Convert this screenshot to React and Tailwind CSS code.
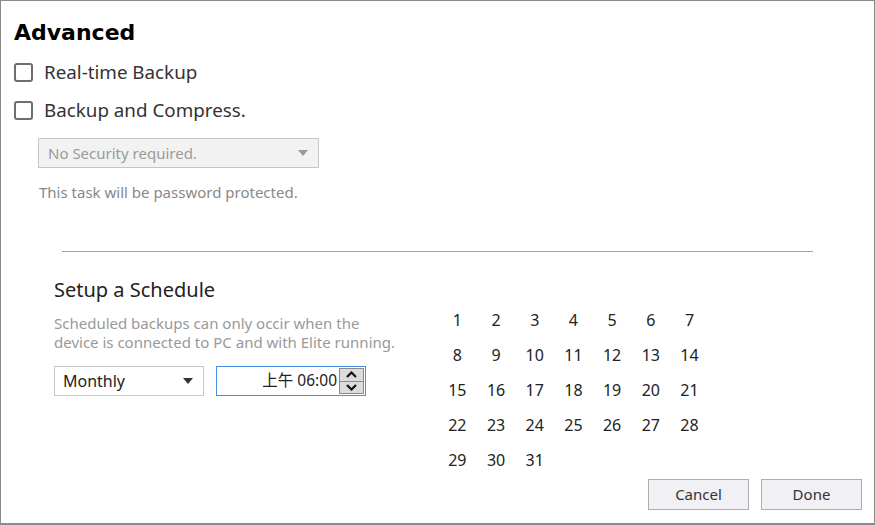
import React from 'react';

const font = { fontFamily: '"Noto Sans", "Noto Sans CJK TC", sans-serif' };

function Checkbox({ label }) {
    return (
        <label className="flex items-center h-[38px] gap-[11px]">
            <span className="w-[19px] h-[19px] rounded-[3px] border-2 border-[#6e6e6e] bg-white" />
            <span className="text-[18.8px] text-[#333]">{label}</span>
        </label>
    );
}

function Caret({ color = '#333' }) {
    return (
        <svg width="10" height="6" viewBox="0 0 10 6">
            <path d="M0 0 L10 0 L5 6 Z" fill={color} />
        </svg>
    );
}

export default function App() {
    const days = Array.from({ length: 31 }, (_, i) => i + 1);

    return (
        <div className="w-[875px] h-[525px] bg-white border border-[#8a8a8a] border-b-2 flex flex-col text-[#222]" style={font}>
            <div className="pl-[13px] pt-[17px]">
                <h1 className="text-[22px] leading-[30px] font-bold text-black" style={{ fontFamily: '"DejaVu Sans", sans-serif' }}>
                    Advanced
                </h1>
                <div className="mt-[5px]">
                    <Checkbox label="Real-time Backup" />
                    <Checkbox label="Backup and Compress." />
                </div>
                <div className="ml-[24px] mt-[9px] w-[281px] h-[30px] bg-[#f2f2f2] border border-[#c6c6c6] flex items-center justify-between pl-[9px] pr-[10px]">
                    <span className="text-[15px] text-[#9a9a9a]">No Security required.</span>
                    <Caret color="#999" />
                </div>
                <p className="ml-[25px] mt-[14px] text-[15px] leading-[20px] text-[#888]">This task will be password protected.</p>
            </div>

            <div className="ml-[61px] mt-[49px] w-[751px] h-px bg-[#a0a0a0]" />

            <div className="flex pl-[53px] pt-[24px]">
                <div className="w-[384px]">
                    <h2 className="text-[20px] leading-[28px] text-[#222]">Setup a Schedule</h2>
                    <p className="mt-[10px] text-[15px] leading-[19px] text-[#999]">
                        Scheduled backups can only occir when the<br />
                        device is connected to PC and with Elite running.
                    </p>
                    <div className="flex gap-[12px] mt-[14px]">
                        <div className="w-[150px] h-[30px] border border-[#c8c8c8] flex items-center justify-between pl-[8px] pr-[10px]">
                            <span className="text-[16px] text-[#222]">Monthly</span>
                            <Caret />
                        </div>
                        <div className="w-[150px] h-[30px] border border-[#4a90e2] flex items-center justify-end pr-[1px]">
                            <span className="text-[15.5px] text-[#222] mr-[2px]">上午 06:00</span>
                            <div className="flex flex-col w-[25px] h-[26px] border border-[#8a8a8a] bg-[#dcdcdc]">
                                <div className="flex-1 flex items-center justify-center border-b border-[#8a8a8a]">
                                    <svg width="11" height="7" viewBox="0 0 11 7"><path d="M1 6 L5.5 1.5 L10 6" stroke="#111" strokeWidth="2.2" fill="none" /></svg>
                                </div>
                                <div className="flex-1 flex items-center justify-center">
                                    <svg width="11" height="7" viewBox="0 0 11 7"><path d="M1 1 L5.5 5.5 L10 1" stroke="#111" strokeWidth="2.2" fill="none" /></svg>
                                </div>
                            </div>
                        </div>
                    </div>
                </div>
                <div className="grid grid-cols-[repeat(7,38.7px)] auto-rows-[35px] mt-[26px]">
                    {days.map(d => (
                        <div key={d} className="flex items-center justify-center text-[16px] text-[#222]">{d}</div>
                    ))}
                </div>
            </div>

            <div className="flex justify-end gap-[12px] pr-[12px] mt-auto mb-[13px]">
                <button className="w-[101px] h-[31px] bg-[#f0f0f5] border border-[#adadad] text-[15px] text-[#333]">Cancel</button>
                <button className="w-[101px] h-[31px] bg-[#f0f0f5] border border-[#adadad] text-[15px] text-[#333]">Done</button>
            </div>
        </div>
    );
}
